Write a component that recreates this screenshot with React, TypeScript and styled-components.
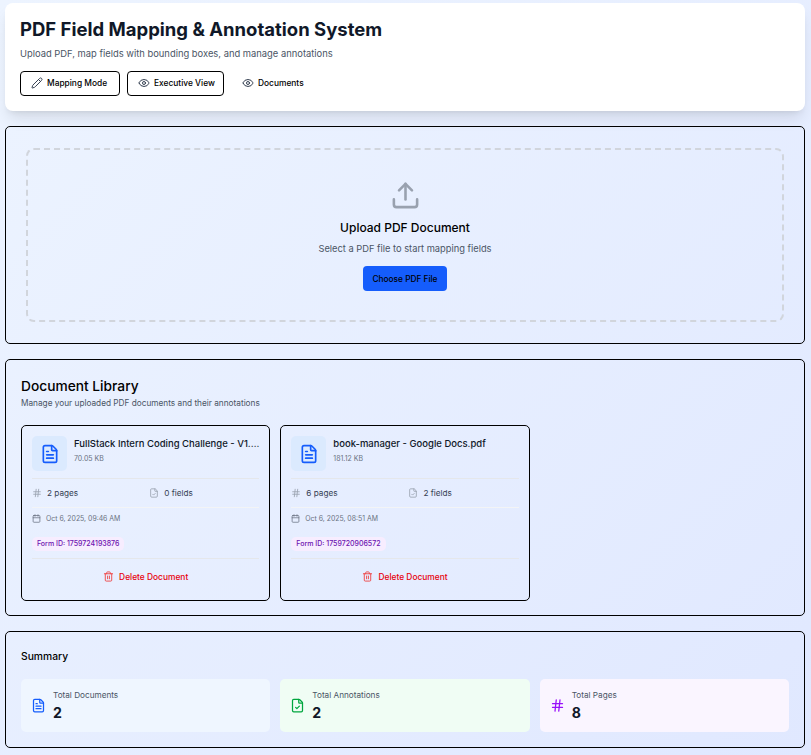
import React from "react";
import styled, { createGlobalStyle } from "styled-components";
import { Pencil, Eye, Upload, FileText, Hash, FileCheck, Calendar, Trash2 } from "lucide-react";

const Global = createGlobalStyle`
  html, body { margin: 0; padding: 0; }
  body {
    font-family: Inter, "Liberation Sans", sans-serif;
    background: linear-gradient(135deg, #edf4ff 0%, #e0e8ff 100%);
    min-height: 755px;
    overflow: hidden;
    color: #000;
  }
`;
const Page = styled.div`
  display: flex; flex-direction: column; gap: 15px;
  padding: 3px 6px 0 5px;
`;
const Header = styled.header`
  background: #fff; border-radius: 8px; padding: 15px;
  height: 108px; box-sizing: border-box;
  box-shadow: 0 10px 15px -3px rgba(0,0,0,.1), 0 4px 6px -4px rgba(0,0,0,.1);
`;
const Title = styled.h1`
  margin: 0; font-size: 18.5px; line-height: 23px; font-weight: 700; color: #101828;
`;
const Sub = styled.p`
  margin: 6px 0 0; font-size: 9.4px; line-height: 14px; color: #4a5565;
`;
const Tabs = styled.div`display: flex; gap: 7px; margin-top: 10px;`;
const Tab = styled.button<{ $plain?: boolean; $w: number }>`
  width: ${(p) => p.$w}px; height: 25px; box-sizing: border-box; display: flex; align-items: center; gap: 4px;
  padding: 0 0 2px 10px; background: transparent; border-radius: 4px;
  border: 1px solid ${(p) => (p.$plain ? "transparent" : "#000")};
  font: 500 8.4px Inter, sans-serif; color: #000; white-space: nowrap;
  svg { color: #364153; flex: none; }
`;
const Panel = styled.section`
  border: 1px solid #000; border-radius: 5px; box-sizing: border-box;
`;
const UploadPanel = styled(Panel)`height: 218px; padding: 21px 20px;`;
const Drop = styled.div`
  height: 174px; box-sizing: border-box; border: 2px dashed #d1d5dc; border-radius: 8px;
  display: flex; flex-direction: column; align-items: center; padding-top: 30px;
  svg { color: #99a1af; }
`;
const DropTitle = styled.h3`
  margin: 8px 0 0; font-size: 12px; line-height: 18px; font-weight: 500; color: #000;
`;
const DropSub = styled.p`
  margin: 5px 0 0; font-size: 9.3px; line-height: 14px; color: #4a5565;
`;
const Choose = styled.button`
  margin-top: 10px; height: 25px; width: 84px; padding: 0; border: none; border-radius: 4px;
  background: #155dfc; color: #000; font: 500 8.3px Inter, sans-serif;
`;
const LibPanel = styled(Panel)`height: 257px; padding: 16px 15px 15px;`;
const LibTitle = styled.h2`
  margin: 0; font-size: 13.75px; line-height: 21px; font-weight: 500; color: #000;
`;
const LibSub = styled.p`
  margin: 0; font-size: 8.25px; line-height: 13px; color: #4a5565;
`;
const Grid = styled.div`
  display: grid; grid-template-columns: repeat(3, minmax(0, 1fr)); gap: 10px; margin-top: 15px;
`;
const Card = styled.article`
  border: 1px solid #000; border-radius: 5px; height: 176px; box-sizing: border-box;
  padding: 10px; display: flex; flex-direction: column;
`;
const CardTop = styled.div`
  display: flex; gap: 7px; padding-bottom: 7px; border-bottom: 1px solid #e5e7eb;
`;
const IconBox = styled.div`
  width: 35px; height: 35px; flex: none; border-radius: 5px; background: #dbeafe;
  display: flex; align-items: center; justify-content: center; color: #155dfc;
`;
const CardInfo = styled.div`min-width: 0; flex: 1; padding-top: 1px;`;
const Name = styled.div`
  font-size: 9.5px; line-height: 14px; font-weight: 500; color: #101828;
  white-space: nowrap; overflow: hidden; text-overflow: ellipsis; margin-right: -3px;
`;
const Size = styled.div`font-size: 7px; line-height: 11px; color: #6a7282; margin-top: 2px;`;
const Stats = styled.div`
  display: grid; grid-template-columns: 1fr 1fr; gap: 7px; height: 28px; align-items: center;
  border-bottom: 1px solid #f3f4f6;
`;
const Stat = styled.div`
  display: flex; align-items: center; gap: 5px; font-size: 8.2px; color: #364153;
  svg { color: #99a1af; }
`;
const DateRow = styled.div`
  display: flex; align-items: center; gap: 5px; font-size: 6.9px; color: #6a7282;
  margin-top: 3px; height: 14px;
  svg { color: #6a7282; }
`;
const Badge = styled.div`
  align-self: flex-start; margin-top: 12px; padding: 0 5px; height: 14px; line-height: 14px;
  border-radius: 5px; background: #f7edff; color: #6e11b0; font-size: 7px; font-weight: 500;
`;
const DeleteRow = styled.div`
  margin-top: 7px; border-top: 1px solid #e5e7eb; padding-top: 12px;
  display: flex; align-items: center; justify-content: center; gap: 5px;
  font-size: 8.4px; font-weight: 500; color: #e7000b;
  svg { color: #ef4444; }
`;
const SumPanel = styled(Panel)`height: 117px; padding: 14px 15px 15px;`;
const SumTitle = styled.h3`
  margin: 3px 0 0; font-size: 10.3px; line-height: 14px; font-weight: 500; color: #000;
`;
const SumGrid = styled.div`
  display: grid; grid-template-columns: repeat(3, minmax(0, 1fr)); gap: 10px; margin-top: 16px;
`;
const SumCard = styled.div<{ $bg: string; $fg: string }>`
  height: 53px; border-radius: 5px; background: ${(p) => p.$bg};
  display: flex; align-items: center; gap: 7px; padding: 0 10px;
  svg { color: ${(p) => p.$fg}; flex: none; }
`;
const SumLabel = styled.div`font-size: 8.2px; line-height: 12px; color: #4a5565;`;
const SumValue = styled.div`font-size: 14.1px; line-height: 19px; font-weight: 700; color: #101828; margin-top: 2px;`;

const docs = [
  { name: "FullStack Intern Coding Challenge - V1.pdf", size: "70.05 KB", pages: 2, fields: 0, date: "Oct 6, 2025, 09:46 AM", id: "1759724193876" },
  { name: "book-manager - Google Docs.pdf", size: "181.12 KB", pages: 6, fields: 2, date: "Oct 6, 2025, 08:51 AM", id: "1759720906572" },
];

export default function App() {
  return (
    <Page>
      <Global />
      <Header>
        <Title>PDF Field Mapping &amp; Annotation System</Title>
        <Sub>Upload PDF, map fields with bounding boxes, and manage annotations</Sub>
        <Tabs>
          <Tab $w={100}><Pencil size={12} />Mapping Mode</Tab>
          <Tab $w={97}><Eye size={12} />Executive View</Tab>
          <Tab $plain $w={85}><Eye size={12} />Documents</Tab>
        </Tabs>
      </Header>
      <UploadPanel>
        <Drop>
          <Upload size={31} />
          <DropTitle>Upload PDF Document</DropTitle>
          <DropSub>Select a PDF file to start mapping fields</DropSub>
          <Choose>Choose PDF File</Choose>
        </Drop>
      </UploadPanel>
      <LibPanel>
        <LibTitle>Document Library</LibTitle>
        <LibSub>Manage your uploaded PDF documents and their annotations</LibSub>
        <Grid>
          {docs.map((d) => (
            <Card key={d.id}>
              <CardTop>
                <IconBox><FileText size={20} /></IconBox>
                <CardInfo>
                  <Name>{d.name}</Name>
                  <Size>{d.size}</Size>
                </CardInfo>
              </CardTop>
              <Stats>
                <Stat><Hash size={10} />{d.pages} pages</Stat>
                <Stat><FileCheck size={10} />{d.fields} fields</Stat>
              </Stats>
              <DateRow><Calendar size={9} />{d.date}</DateRow>
              <Badge>Form ID: {d.id}</Badge>
              <DeleteRow><Trash2 size={11} />Delete Document</DeleteRow>
            </Card>
          ))}
        </Grid>
      </LibPanel>
      <SumPanel>
        <SumTitle>Summary</SumTitle>
        <SumGrid>
          <SumCard $bg="#eff6ff" $fg="#155dfc"><FileText size={15} /><div><SumLabel>Total Documents</SumLabel><SumValue>2</SumValue></div></SumCard>
          <SumCard $bg="#f0fdf4" $fg="#00a63e"><FileCheck size={15} /><div><SumLabel>Total Annotations</SumLabel><SumValue>2</SumValue></div></SumCard>
          <SumCard $bg="#faf5ff" $fg="#9810fa"><Hash size={15} /><div><SumLabel>Total Pages</SumLabel><SumValue>8</SumValue></div></SumCard>
        </SumGrid>
      </SumPanel>
    </Page>
  );
}
